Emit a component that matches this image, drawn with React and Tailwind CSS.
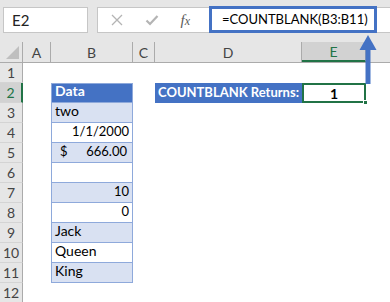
import React from 'react';

const COLS = [
  { key: 'A', w: 'w-[28px]' },
  { key: 'B', w: 'w-[82px]' },
  { key: 'C', w: 'w-[22px]' },
  { key: 'D', w: 'w-[147px]' },
  { key: 'E', w: 'w-[64px]' },
];

const data = [
  { row: 3, text: 'two', fill: true },
  { row: 4, text: '1/1/2000', right: true },
  { row: 5, money: '666.00', fill: true },
  { row: 6, text: '' },
  { row: 7, text: '10', right: true, fill: true },
  { row: 8, text: '0', right: true },
  { row: 9, text: 'Jack', fill: true },
  { row: 10, text: 'Queen' },
  { row: 11, text: 'King', fill: true },
];

const RowHead = ({ n, active }) => (
  <div
    className={
      'w-[23px] h-[20px] shrink-0 flex items-center justify-center text-[14px] border-b border-[#d4d4d4] ' +
      (active
        ? 'bg-[#d2d2d2] text-[#217346] border-r-2 border-r-[#217346]'
        : 'bg-[#e6e6e6] text-[#444] border-r border-r-[#ababab]')
    }
  >
    {n}
  </div>
);

const DataCell = ({ d }) => (
  <div
    className={
      'w-[82px] h-[20px] shrink-0 flex items-end pb-[1px] px-[3px] text-black border-x border-b border-[#8ea9db] ' +
      (d.fill ? 'bg-[#d9e1f2] ' : 'bg-white ') +
      (d.right ? 'justify-end text-[13px]' : 'justify-start text-[14px]')
    }
  >
    {d.money ? (
      <div className="flex w-full justify-between pl-[5px] pr-[2px] text-[13px]">
        <span>$</span>
        <span>{d.money}</span>
      </div>
    ) : (
      d.text
    )}
  </div>
);

export default function App() {
  return (
    <div
      className="relative w-[390px] h-[302px] overflow-hidden bg-white select-none"
      style={{ fontFamily: 'Lato, "Liberation Sans", sans-serif' }}
    >
      {/* formula bar */}
      <div className="h-[42px] bg-[#e6e6e6] flex items-start pt-[7px] pl-[3px]">
        <div className="w-[85px] h-[26px] bg-white border border-[#c6c6c6] flex items-center pl-[8px] text-[15px] text-[#222]">
          E2
        </div>
        <div className="w-[9px]" />
        <div className="flex-1 h-[26px] bg-white border border-[#c6c6c6] border-r-0 flex items-center">
          <div className="w-[111px] flex items-center justify-around pl-[2px] pr-[8px]">
            <svg width="12" height="12" viewBox="0 0 12 12">
              <path d="M1 1L11 11M11 1L1 11" stroke="#b4b4b4" strokeWidth="1.3" fill="none" />
            </svg>
            <svg width="14" height="12" viewBox="0 0 14 12">
              <path d="M1.5 6.5L5 10L12.5 2" stroke="#b4b4b4" strokeWidth="2.2" fill="none" />
            </svg>
            <span
              className="text-[15px] italic text-[#5a5a5a]"
              style={{ fontFamily: '"Liberation Serif", serif' }}
            >
              f<span className="text-[12px]">x</span>
            </span>
          </div>
          <div className="w-[168px] h-[27px] -mt-[1px] border-[3px] border-[#4472c4] flex items-center pl-[10px] text-[13px] whitespace-nowrap text-black">
            =COUNTBLANK(B3:B11)
          </div>
        </div>
      </div>

      {/* column headers */}
      <div className="flex h-[21px] bg-[#e6e6e6] border-b border-[#ababab]">
        <div className="w-[23px] shrink-0 border-r border-[#ababab] relative">
          <div className="absolute right-[3px] bottom-[3px] w-0 h-0 border-l-[13px] border-l-transparent border-b-[13px] border-b-[#bfbfbf]" />
        </div>
        {COLS.map((c) =>
          c.key === 'E' ? (
            <div
              key={c.key}
              className={c.w + ' shrink-0 flex items-center justify-center text-[14px] text-[#217346] bg-[#d2d2d2] border-r border-[#ababab] border-b-2 border-b-[#217346]'}
            >
              {c.key}
            </div>
          ) : (
            <div
              key={c.key}
              className={c.w + ' shrink-0 flex items-center justify-center text-[14px] text-[#444] border-r border-[#ababab]'}
            >
              {c.key}
            </div>
          )
        )}
        <div className="flex-1" />
      </div>

      {/* row 1 */}
      <div className="flex">
        <RowHead n={1} />
      </div>

      {/* row 2 */}
      <div className="flex">
        <RowHead n={2} active />
        <div className="w-[28px] shrink-0" />
        <div className="w-[82px] h-[20px] shrink-0 bg-[#4472c4] border border-[#8ea9db] flex items-end pb-[1px] px-[3px] text-[14px] font-bold text-white">
          Data
        </div>
        <div className="w-[22px] shrink-0" />
        <div className="w-[147px] h-[20px] shrink-0 bg-[#4472c4] flex items-end pb-[1px] justify-end pr-[3px] text-[13px] font-bold whitespace-nowrap text-white">
          COUNTBLANK Returns:
        </div>
        <div className="relative w-[64px] h-[20px] shrink-0 border-2 border-[#217346] flex items-center justify-center text-[14px] font-bold text-black">
          1
          <div className="absolute -right-[4px] -bottom-[4px] w-[5px] h-[5px] bg-[#217346] border border-white" />
        </div>
      </div>

      {/* data rows */}
      {data.map((d) => (
        <div key={d.row} className="flex">
          <RowHead n={d.row} />
          <div className="w-[28px] shrink-0" />
          <DataCell d={d} />
        </div>
      ))}

      <div className="flex">
        <RowHead n={12} />
      </div>

      {/* annotation arrow */}
      <svg className="absolute left-[357px] top-[34px]" width="22" height="50" viewBox="0 0 22 50">
        <path d="M8.5 15H13.5V50H8.5Z" fill="#4472c4" />
        <path d="M11 1L19.5 16H2.5Z" fill="#4472c4" />
      </svg>
    </div>
  );
}
